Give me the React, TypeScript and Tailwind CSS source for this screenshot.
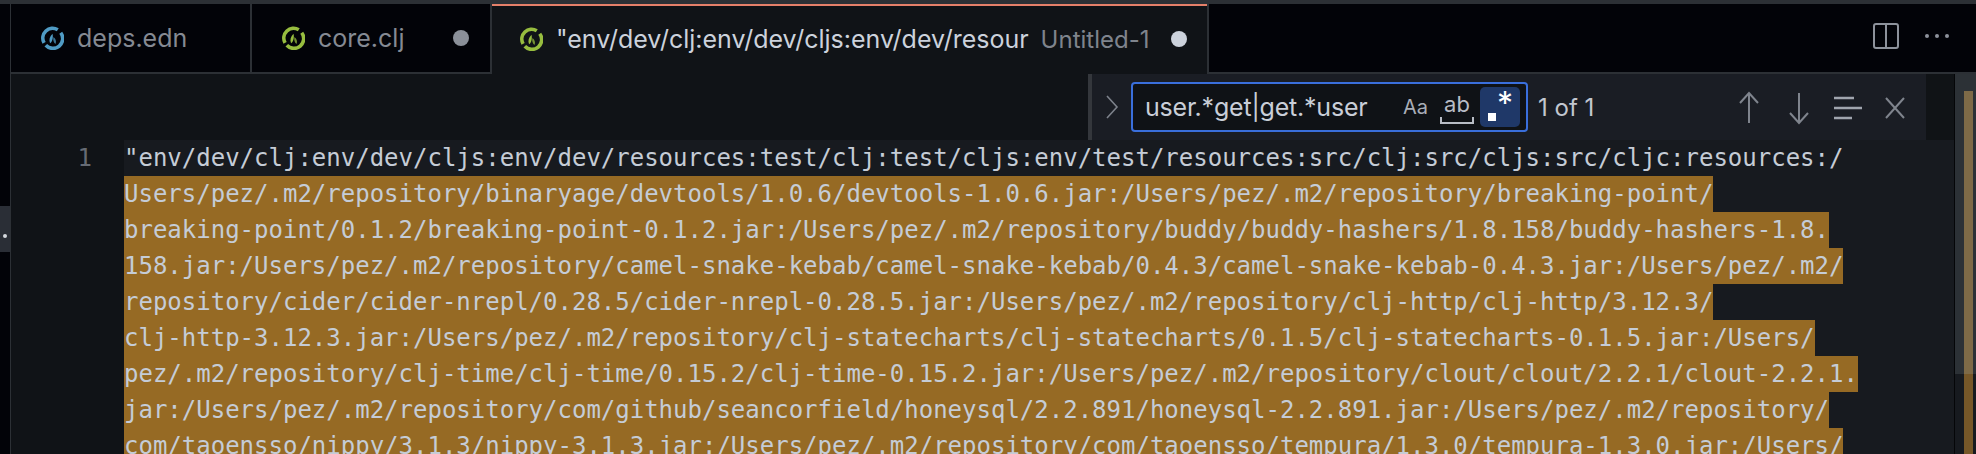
const LINES = [
  'Users/pez/.m2/repository/binaryage/devtools/1.0.6/devtools-1.0.6.jar:/Users/pez/.m2/repository/breaking-point/',
  'breaking-point/0.1.2/breaking-point-0.1.2.jar:/Users/pez/.m2/repository/buddy/buddy-hashers/1.8.158/buddy-hashers-1.8.',
  '158.jar:/Users/pez/.m2/repository/camel-snake-kebab/camel-snake-kebab/0.4.3/camel-snake-kebab-0.4.3.jar:/Users/pez/.m2/',
  'repository/cider/cider-nrepl/0.28.5/cider-nrepl-0.28.5.jar:/Users/pez/.m2/repository/clj-http/clj-http/3.12.3/',
  'clj-http-3.12.3.jar:/Users/pez/.m2/repository/clj-statecharts/clj-statecharts/0.1.5/clj-statecharts-0.1.5.jar:/Users/',
  'pez/.m2/repository/clj-time/clj-time/0.15.2/clj-time-0.15.2.jar:/Users/pez/.m2/repository/clout/clout/2.2.1/clout-2.2.1.',
  'jar:/Users/pez/.m2/repository/com/github/seancorfield/honeysql/2.2.891/honeysql-2.2.891.jar:/Users/pez/.m2/repository/',
  'com/taoensso/nippy/3.1.3/nippy-3.1.3.jar:/Users/pez/.m2/repository/com/taoensso/tempura/1.3.0/tempura-1.3.0.jar:/Users/',
]

function ClojureIcon({ color }: { color: string }) {
  return (
    <svg width="23" height="24" viewBox="0 0 24 24" fill="none" className="shrink-0">
      <path d="M3.2 17A10.2 10.2 0 0 1 17.5 3.4" stroke={color} strokeWidth="3.8" />
      <path d="M20.6 6.5A10.2 10.2 0 0 1 5 19.6" stroke={color} strokeWidth="3.8" />
      <path d="M12 7.5C9 10.5 8 14 9.5 17.5C12.2 15.5 12.8 11 12 7.5Z" fill={color} />
      <path d="M13 11C15.5 13 16.2 15.5 15.2 18.2C13 17 12.3 14 13 11Z" fill={color} opacity="0.75" />
    </svg>
  )
}

function Tab({ name, color, dirty, width }: { name: string; color: string; dirty?: boolean; width: string }) {
  return (
    <div className={`flex h-full items-center border-r-2 border-b-2 border-[#2c3035] pl-[30px] ${width}`}>
      <ClojureIcon color={color} />
      <span className="ml-[13px] pt-[2px] text-[25px] text-[#858a93]">{name}</span>
      {dirty && <span className="ml-auto mr-[21px] size-4 rounded-full bg-[#8b9099]" />}
    </div>
  )
}

function FindWidget() {
  return (
    <div className="absolute top-0 right-0 flex h-[66px]">
      <div className="flex w-[838px] items-center border-l-4 border-[#34373c] bg-[#1a1d24] font-['Inter',sans-serif]">
        <svg width="14" height="26" viewBox="0 0 14 26" fill="none" className="ml-[13px] shrink-0">
          <path d="M2 2L12 13L2 24" stroke="#7d828b" strokeWidth="1.6" />
        </svg>
        <div className="ml-[12px] flex h-[50px] w-[397px] shrink-0 items-center rounded-[4px] border-2 border-[#3a6fdc] bg-[#0f1216] pl-3 pr-[2px]">
          <span className="w-[222px] shrink-0 pt-[2px] text-[25px] tracking-[-0.2px] whitespace-nowrap text-[#c9ced8]">user.*get|get.*user</span>
          <span className="ml-[36px] w-[25px] text-[20px] text-[#a9aeb8]">Aa</span>
          <span className="relative ml-[12px] h-[34px] w-[34px] shrink-0 text-center text-[22px] leading-[28px] text-[#b8bdc6]">
            ab
            <svg width="34" height="8" viewBox="0 0 34 8" fill="none" className="absolute bottom-0 left-0">
              <path d="M1 1V7H33V1" stroke="#b8bdc6" strokeWidth="2" />
            </svg>
          </span>
          <span className="relative ml-[6px] h-[40px] w-[40px] shrink-0 rounded-[5px] bg-[#1f3868]">
            <span className="absolute left-[8px] bottom-[6px] size-[8px] bg-white" />
            <span className="absolute left-[17px] top-[-3px] text-[32px] leading-[40px] text-white">*</span>
          </span>
        </div>
        <span className="ml-[10px] pt-[2px] text-[24px] text-[#c2c7d0]">1 of 1</span>
        <svg width="22" height="36" viewBox="0 0 22 36" fill="none" className="ml-[144px] mt-[2px] shrink-0">
          <path d="M11 33V3M2 13L11 3L20 13" stroke="#7f848d" strokeWidth="2" />
        </svg>
        <svg width="22" height="36" viewBox="0 0 22 36" fill="none" className="ml-[28px] mt-[2px] shrink-0">
          <path d="M11 3V33M2 23L11 33L20 23" stroke="#7f848d" strokeWidth="2" />
        </svg>
        <svg width="30" height="26" viewBox="0 0 30 26" fill="none" className="ml-[23px] mt-[2px] shrink-0">
          <path d="M1 3H21M1 13H29M1 23H19" stroke="#a0a5ae" strokeWidth="2.4" />
        </svg>
        <svg width="22" height="24" viewBox="0 0 22 24" fill="none" className="ml-[21px] mt-[2px] shrink-0">
          <path d="M2 2L20 22M20 2L2 22" stroke="#7f848d" strokeWidth="2" />
        </svg>
      </div>
      <div className="w-[28px] bg-[#101316]" />
    </div>
  )
}

export default function App() {
  return (
    <div className="flex h-[454px] w-[1976px] flex-col overflow-hidden bg-[#101317] font-['Inter',sans-serif]">
      <div className="h-1 shrink-0 bg-[#2c3035]" />
      <div className="flex h-[70px] shrink-0 bg-[#020308]">
        <div className="w-[10px] shrink-0 border-b-2 border-[#020308]" />
        <div className="w-px shrink-0 bg-[#2c3035]" />
        <Tab name="deps.edn" color="#4f9bc4" width="w-[241px]" />
        <Tab name="core.clj" color="#97bd3f" dirty width="w-[240px]" />
        <div className="flex w-[715px] items-center border-t-2 border-[#e5806a] bg-[#101317] pb-[2px] pl-[28px] pr-[20px]">
          <ClojureIcon color="#97bd3f" />
          <span className="ml-[13px] pt-[2px] text-[25px] text-[#ccd2dc]">"env/dev/clj:env/dev/cljs:env/dev/resour</span>
          <span className="ml-3 pt-[2px] text-[24px] text-[#7f848d]">Untitled-1</span>
          <span className="ml-auto size-4 rounded-full bg-[#ccd2dc]" />
        </div>
        <div className="flex flex-1 items-center border-b-2 border-l-2 border-[#2c3035] pb-[4px]">
          <svg width="26" height="26" viewBox="0 0 26 26" fill="none" className="ml-[664px] shrink-0">
            <rect x="1" y="1" width="24" height="24" rx="2" stroke="#8d929b" strokeWidth="2" />
            <path d="M13 1V25" stroke="#8d929b" strokeWidth="2" />
          </svg>
          <div className="ml-[26px] flex gap-[6px]">
            <span className="size-1 rounded-full bg-[#8d929b]" />
            <span className="size-1 rounded-full bg-[#8d929b]" />
            <span className="size-1 rounded-full bg-[#8d929b]" />
          </div>
        </div>
      </div>
      <div className="flex min-h-0 flex-1">
        <div className="flex w-[10px] shrink-0 flex-col bg-[#020308] pt-[132px]">
          <div className="flex h-[46px] items-end justify-center bg-[#2a2e36] pb-[14px]">
            <span className="size-1 rounded-full bg-[#d5d8de]" />
          </div>
        </div>
        <div className="w-px shrink-0 bg-[#2c3035]" />
        <div className="relative flex min-w-0 flex-1 flex-col pt-[66px]">
          <FindWidget />
          <div className="flex min-h-0 flex-1 font-['DejaVu_Sans_Mono',monospace] text-[24px] leading-[36px] text-[#c5ccd6]">
            <div className="w-[113px] shrink-0 pr-[32px] text-right text-[#666b74]">1</div>
            <div className="min-w-0 flex-1 overflow-hidden bg-[#171a1f] whitespace-pre">
              <div>"env/dev/clj:env/dev/cljs:env/dev/resources:test/clj:test/cljs:env/test/resources:src/clj:src/cljs:src/cljc:resources:/</div>
              {LINES.map((l) => (
                <div key={l} className="w-fit bg-[#966a24]">{l}</div>
              ))}
            </div>
          </div>
        </div>
        <div className="w-px shrink-0 bg-[#050608]" />
        <div className="relative w-[21px] shrink-0 bg-[#171a1f]">
          <div className="h-[300px] bg-[#2c3136]" />
          <div className="absolute top-[17px] bottom-0 left-[9px] w-[9px] bg-[#765728]" />
          <div className="absolute top-[17px] left-[9px] h-[283px] w-[9px] bg-[#7e6a47]" />
        </div>
      </div>
    </div>
  )
}
